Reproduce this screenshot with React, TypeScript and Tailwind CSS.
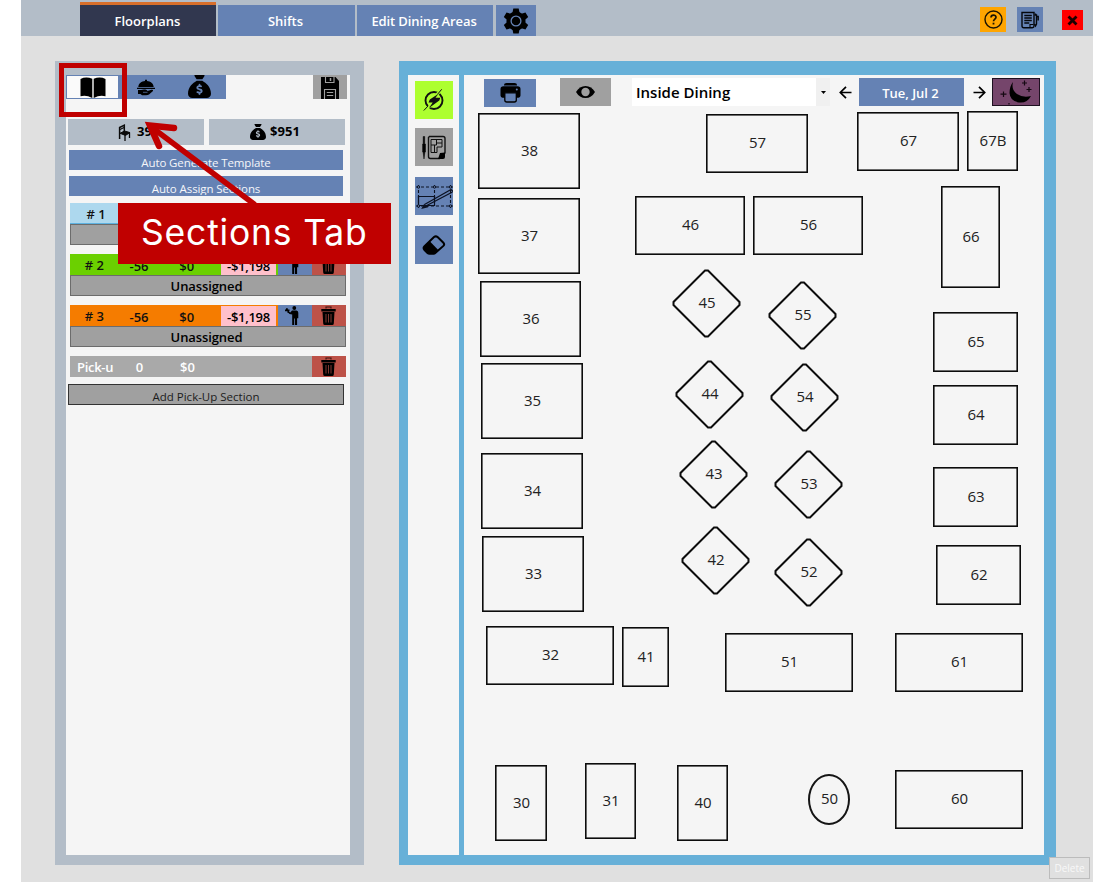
import React from "react";
import { FaSackDollar } from "react-icons/fa6";

type Shape = "rect" | "diamond" | "oval";
type Table = { id: string; x: number; y: number; w: number; h: number; shape?: Shape };

// Table positions are in canvas pixels, measured from the floor's top-left corner.
const tables: Table[] = [
  { id: "38", x: 14, y: 38, w: 102, h: 76 },
  { id: "37", x: 14, y: 123, w: 102, h: 76 },
  { id: "36", x: 16, y: 206, w: 101, h: 76 },
  { id: "35", x: 17, y: 288, w: 102, h: 76 },
  { id: "34", x: 17, y: 378, w: 102, h: 76 },
  { id: "33", x: 18, y: 461, w: 102, h: 76 },
  { id: "32", x: 22, y: 551, w: 128, h: 59 },
  { id: "41", x: 158, y: 552, w: 47, h: 60 },
  { id: "51", x: 261, y: 558, w: 128, h: 59 },
  { id: "61", x: 431, y: 558, w: 128, h: 59 },
  { id: "60", x: 431, y: 695, w: 128, h: 59 },
  { id: "30", x: 31, y: 690, w: 52, h: 76 },
  { id: "31", x: 121, y: 688, w: 51, h: 76 },
  { id: "40", x: 213, y: 690, w: 51, h: 76 },
  { id: "57", x: 242, y: 39, w: 102, h: 59 },
  { id: "67", x: 393, y: 37, w: 102, h: 59 },
  { id: "67B", x: 503, y: 36, w: 51, h: 60 },
  { id: "46", x: 171, y: 121, w: 110, h: 59 },
  { id: "56", x: 289, y: 121, w: 110, h: 59 },
  { id: "66", x: 477, y: 111, w: 59, h: 102 },
  { id: "65", x: 469, y: 237, w: 85, h: 60 },
  { id: "64", x: 469, y: 310, w: 85, h: 60 },
  { id: "63", x: 469, y: 392, w: 85, h: 60 },
  { id: "62", x: 472, y: 470, w: 85, h: 60 },
  { id: "45", x: 208, y: 194, w: 69, h: 69, shape: "diamond" },
  { id: "55", x: 304, y: 206, w: 69, h: 69, shape: "diamond" },
  { id: "44", x: 211, y: 285, w: 69, h: 69, shape: "diamond" },
  { id: "54", x: 306, y: 288, w: 69, h: 69, shape: "diamond" },
  { id: "43", x: 215, y: 365, w: 69, h: 69, shape: "diamond" },
  { id: "53", x: 310, y: 375, w: 69, h: 69, shape: "diamond" },
  { id: "42", x: 217, y: 451, w: 69, h: 69, shape: "diamond" },
  { id: "52", x: 310, y: 463, w: 69, h: 69, shape: "diamond" },
  { id: "50", x: 344, y: 699, w: 42, h: 51, shape: "oval" },
];

function TableShape({ t }: { t: Table }) {
  return (
    <div
      className="absolute flex items-center justify-center text-[15px] leading-none text-[#222]"
      style={{ left: t.x, top: t.y, width: t.w, height: t.h }}
    >
      {t.shape === "diamond" ? (
        <svg className="absolute inset-0 size-full" viewBox="0 0 69 69">
          <path d="M33 1.500h3L67.500 33v3L36 67.500h-3L1.500 36v-3z" fill="none" stroke="#0c0c0c" strokeWidth="2" />
        </svg>
      ) : t.shape === "oval" ? (
        <div className="absolute inset-0 rounded-[50%] border-2 border-[#151515]" />
      ) : (
        <svg className="absolute inset-0 size-full">
          <rect x="0.800" y="0.800" width={t.w - 1.6} height={t.h - 1.6} fill="none" stroke="#0c0c0c" strokeWidth="1.600" />
        </svg>
      )}
      <span className="relative -top-px left-[0.5px]">{t.id}</span>
    </div>
  );
}

function GearIcon() {
  return (
    <svg className="size-[26px]" viewBox="0 0 26 26">
      <g fill="#000">
        <circle cx="13" cy="13" r="9.600" />
        {[0, 60, 120].map((a) => (
          <path key={a} transform={`rotate(${a} 13 13)`} d="M10.300.5h5.400l1 5h-7.400zM10.300 25.500h5.400l1-5h-7.400z" />
        ))}
      </g>
      <circle cx="13" cy="13" r="4.900" fill="none" stroke="#6582b4" strokeWidth="1.300" />
    </svg>
  );
}

function HelpIcon() {
  return (
    <svg className="size-[19px]" viewBox="0 0 19 19" fill="none" stroke="#1c1400" strokeWidth="1.400">
      <circle cx="9.500" cy="9.500" r="8.500" />
      <path d="M7 7.500C7 4.300 12 4.300 12 7.200c0 1.700-2.500 2-2.500 4" strokeWidth="1.700" />
      <path d="M9.500 12.700v1.800" strokeWidth="1.800" />
    </svg>
  );
}

function NotesIcon() {
  return (
    <svg className="h-[18px] w-[18px]" viewBox="0 0 18 18" fill="none" stroke="#05070c" strokeWidth="1.400">
      <path d="M1 1.500h12V15q0 1.700-1.700 1.700H2.700Q1 16.700 1 15z" />
      <path d="M3.300 4.500h7.500M3.300 7h7.500M3.300 9.500h7.500M3.300 12h5" strokeWidth="1.300" />
      <path d="M13.500 4h2v9l-1 2-1-2M15.500 5.500h1.700v4M14.500 4V2.500" />
      <path d="M9 16.500v-3h3.500" strokeWidth="1.100" />
    </svg>
  );
}

function BookIcon() {
  return (
    <svg className="h-[21px] w-[26px]" viewBox="0 0 26 21">
      <path d="M.5 2Q6-.8 12.300 1.800V21Q6 17.500.5 19.300zM13.700 1.800Q20-.8 25.500 2v17.300Q20 17.500 13.700 21z" />
    </svg>
  );
}

function ServeIcon() {
  return (
    <svg className="h-[17px] w-[18px]" viewBox="0 0 18 17">
      <path d="M1.300 8C1.500 4.300 4.600 2.200 8 2V1q1-1 2 0v1c3.400.2 6.500 2.300 6.700 6zM0 8.700h18v1.400H0zM1 11h3l3-.4c1.500 0 3 .3 3.500 1.500l4-1.300q2-.2 1.500 1.200l-4 3.500q-1 .8-3 .8H5L3.500 15H1z" />
      <path d="M6 13.300h4.500" stroke="#6582b4" strokeWidth=".7" />
    </svg>
  );
}

function SaveIcon() {
  return (
    <svg className="h-[22px] w-[20px]" viewBox="0 0 20 22">
      <path d="M1 0h14.500L19 4v18H1z" />
      <path d="M5.500 0v5.500h8.500V0M4.500 22v-9.500h11V22M6.800 15.500h6.400M6.800 18.500h6.400" fill="none" stroke="#a0a0a0" strokeWidth="1.100" />
      <path d="M10.500 1v3" stroke="#a0a0a0" strokeWidth="1.500" />
    </svg>
  );
}

function ChairIcon() {
  return (
    <svg className="h-[17px] w-[13px]" viewBox="0 0 13 17" fill="none" stroke="#0a0a0a">
      <path d="M1.600 15V3.500L6.300 1.200V8" strokeWidth="1.500" />
      <path d="M2 9.300 6.500 7l5.500 1.600-4.500 2.800z" fill="#0a0a0a" />
      <path d="M7 10v7M11.500 8.500V14M2 5.500l4-2" strokeWidth="1.300" />
    </svg>
  );
}

function WaiterIcon() {
  return (
    <svg className="h-[19px] w-[14px]" viewBox="0 0 14 19">
      <circle cx="9.300" cy="2" r="1.900" />
      <path d="M7 4.500h4.500q1.800.3 1.800 2.300v5.400h-1.200V19H10v-6.500h-.8V19H7.200V8.500L4.500 8 2.300 5.800 3.300 5l2 1.600z" />
      <path d="M0 3.600h4.500v1.600H0zM1 2.200h1.800V4H1zM2.600 5h1.400v2H2.600z" />
    </svg>
  );
}

function TrashIcon() {
  return (
    <svg className="h-[19px] w-[15px]" viewBox="0 0 15 19">
      <path d="M.3 3h14.400v2.500H.3zM1.500 6h12l-.7 11.500q-.1 1.500-1.500 1.500H3.700q-1.400 0-1.500-1.500z" />
      <path d="M5 2.500V1h5v1.500" fill="none" stroke="#3c1410" strokeWidth="1.100" />
      <path d="M5 8v8.500M7.500 8v8.500M10 8v8.500" stroke="#8c4038" strokeWidth=".9" />
    </svg>
  );
}

function BoltIcon() {
  return (
    <svg className="size-[22px]" viewBox="0 0 22 22">
      <circle cx="11" cy="11.500" r="8.500" fill="none" stroke="#111" strokeWidth="1.900" />
      <path d="M18.500.5 13 6.500M3 17 .8 21.500l6-4" fill="none" stroke="#adff2f" strokeWidth="3" />
      <path d="M15.500 4.800 6.800 10.500 5.500 13.500h4.200L6 19l10.300-7.500 1-2.700h-4.800z" fill="#111" />
      <path d="M18.700.3 14.500 5.300M5 17 .8 21.500" fill="none" stroke="#111" strokeWidth="1" />
    </svg>
  );
}

function BlueprintIcon() {
  return (
    <svg className="h-[25px] w-[24px]" viewBox="0 0 24 25">
      <path d="M1.200 1.500h1.500V9h.8v8H2.900L2 24 1.100 17H.6V9h.6z" stroke="#000" strokeWidth=".5" />
      <path d="M7.500 1.500H21q2 0 2 2v14.500L17.500 23.500H8.500q-2 0-2-2v-19z" fill="none" stroke="#111" strokeWidth="1.400" />
      <path d="M23 17.500l-5 .5-2 6h5q2 0 2-2z" />
      <path d="M9 4.500h11v7.500h-5v5.500H9zM9 10h5.500V4.500M14.500 8H20M12.500 10v7.500" fill="none" stroke="#111" strokeWidth="1" />
    </svg>
  );
}

function GridLinesIcon() {
  return (
    <svg className="size-[38px]" viewBox="0 0 38 38" fill="none" stroke="#0c1222">
      <path d="M1 10h37M1 29h37M3.500 8v24M19.500 8v21M35.500 8v24" strokeWidth="1.100" strokeDasharray="3 2" />
      <path d="M3.500 19.500h16V28.500h-16z" strokeWidth="1.200" />
      <path d="M8 30.500 37.500 15M9.500 27.500 36 12.500l2 2M9.500 27.500l-2 3.500 5.500-1.500" strokeWidth="1.300" />
      <g fill="#6582b4" strokeWidth="1">
        <circle cx="3.500" cy="10" r="1.200" /><circle cx="19.500" cy="10" r="1.200" /><circle cx="35.500" cy="10" r="1.200" />
        <circle cx="3.500" cy="29" r="1.200" /><circle cx="35.500" cy="29" r="1.200" />
      </g>
    </svg>
  );
}

function EraserIcon() {
  return (
    <svg className="h-[20px] w-[24px]" viewBox="0 0 24 20">
      <path d="M8 6.500 2.500 11.500q-1.800 1.700 0 3.500l3 3q.8.800 2 .8H12l4-4z" />
      <path d="M2.500 11.200 12 2.100q1.800-1.500 3.600 0l5.800 5.600q1.500 1.600 0 3.200L13 18.300q-.5.500-1.200.5H7.500q-1.200 0-2-.8l-3-3q-1.800-2 0-3.800z" fill="none" stroke="#000" strokeWidth="2" />
    </svg>
  );
}

function PrintIcon() {
  return (
    <svg className="h-[20px] w-[21px]" viewBox="0 0 21 20">
      <path d="M4 2Q4 0 6.500 0h8Q17 0 17 2v.6H4zM3.500 3.200h14Q20.500 3.200 20.500 6v6.500q0 2-2 2.300H2.500q-2-.3-2-2.300V6q0-2.800 3-2.800z" />
      <path d="M4.800 9.800h11.500V17q0 2-2 2H6.800q-2 0-2-2z" fill="#6582b4" stroke="#000" strokeWidth="1.300" />
      <circle cx="16.800" cy="6.600" r="1" fill="#6582b4" />
    </svg>
  );
}

function EyeIcon() {
  return (
    <svg className="h-[12px] w-[19px]" viewBox="0 0 19 12">
      <path d="M0 6Q3.500 0 9.500 0T19 6Q15.500 12 9.500 12T0 6z" />
      <circle cx="9.500" cy="6" r="4.200" fill="#a0a0a0" />
    </svg>
  );
}

function ArrowIcon({ flip }: { flip?: boolean }) {
  return (
    <svg className={`h-[13px] w-[13px] ${flip ? "rotate-180" : ""}`} viewBox="0 0 13 13" fill="none" stroke="#000" strokeWidth="1.700">
      <path d="M12.500 6.500H1.500M7 .8 1.300 6.500 7 12.200" />
    </svg>
  );
}

function MoonIcon() {
  return (
    <svg className="h-[26px] w-[46px]" viewBox="0 0 46 26">
      <path d="M20 3q-2 8 4 12t14 2q-4 7.500-12 6.500Q17 22 16.500 14 16.700 7 20 3z" />
      <path d="M31.500 1.500v5M29 4h5M36 8v5M33.500 10.500h5M10.500 12.500v5.500M7.500 15.200h6M16 24v1.500" stroke="#140812" strokeWidth="1.200" />
    </svg>
  );
}

const tones = {
  blue: "bg-[#add8ee] border-[#5db1e0]",
  green: "bg-[#6bd000] border-[#6bd000]",
  orange: "bg-[#f57c00] border-[#f57c00]",
};

function Section({ name, tone }: { name: string; tone: keyof typeof tones }) {
  return (
    <div className="ml-1 w-[276px] text-[13px] font-semibold text-black">
      <div className={`flex h-[21px] border-b ${tones[tone]}`}>
        <div className="flex w-[144px] pt-[3px] leading-[19px] text-[#111]">
          <span className="-mt-px w-[49px] text-center whitespace-pre">{name}</span>
          <span className="w-[41px] text-center">-56</span>
          <span className="w-[55px] text-center">$0</span>
        </div>
        <div className="mt-px ml-[7px] h-5 w-[55px] bg-[#ffc0cb] text-center leading-[22px] tracking-[-0.3px]">-$1,198</div>
        <div className="ml-[2px] flex h-[21px] w-[34px] items-center justify-center bg-[#6582b4] pr-[6px]">
          <WaiterIcon />
        </div>
        <div className="flex h-[21px] w-[34px] items-center justify-center bg-[#bd5248] pr-[2px]">
          <TrashIcon />
        </div>
      </div>
      <div className="h-[21px] border border-[#6c6c6c] bg-[#a0a0a0] pr-[3px] text-center leading-[20px] tracking-[-0.1px]">Unassigned</div>
    </div>
  );
}

function TemplateButton({ children }: { children: React.ReactNode }) {
  return (
    <button className="ml-[3px] block h-[20px] w-[274px] overflow-hidden bg-[#6582b4] text-center text-[11.500px] text-[#f4f6fa]">
      <span className="block h-[17px] overflow-hidden pt-[3px] leading-[16px] tracking-[-0.1px]">{children}</span>
    </button>
  );
}

function SectionsPanel() {
  return (
    <aside className="flex h-[804px] w-[309px] flex-col border-t-[14px] border-r-[14px] border-b-[10px] border-l-[11px] border-[#b3bdc8] bg-[#f5f5f5]">
      <div className="flex h-6 shrink-0">
        <div className="flex w-[53px] justify-center border border-[#6582b4] bg-[#fafafa] pt-px"><BookIcon /></div>
        <div className="flex w-[107px] bg-[#6582b4]">
          <div className="flex w-[54px] items-center justify-center"><ServeIcon /></div>
          <div className="flex w-[54px] justify-center overflow-hidden"><FaSackDollar className="size-[23px]" /></div>
        </div>
        <div className="ml-[87px] flex w-[34px] items-end justify-center bg-[#a0a0a0]"><SaveIcon /></div>
      </div>

      <div className="mt-5 ml-[2px] flex h-[26px] shrink-0 gap-[5px] text-[13px] font-bold text-black">
        <div className="flex w-[136px] items-center bg-[#b3bdc8] pl-[50px]">
          <ChairIcon />
          <span className="ml-[6px]">39</span>
        </div>
        <div className="flex w-[136px] items-center bg-[#b3bdc8] pl-[41px]">
          <FaSackDollar className="size-[16px]" />
          <span className="ml-[4px] tracking-[0.1px]">$951</span>
        </div>
      </div>

      <div className="mt-[5px] flex flex-col gap-[6px]">
        <TemplateButton>Auto Generate Template</TemplateButton>
        <TemplateButton>Auto Assign Sections</TemplateButton>
      </div>

      <div className="mt-[7px] flex flex-col gap-[9px]">
        <Section name=" # 1" tone="blue" />
        <Section name="# 2" tone="green" />
        <Section name="# 3" tone="orange" />
        <div className="ml-1 flex h-[21px] w-[276px] bg-[#a9a9a9] text-[13px] leading-[23px] font-semibold text-white">
          <span className="w-[49px] pl-[7px] tracking-[-0.3px]">Pick-u</span>
          <span className="w-[41px] text-center">0</span>
          <span className="w-[55px] text-center">$0</span>
          <div className="ml-auto flex w-[34px] items-center justify-center bg-[#bd5248] pr-[2px]"><TrashIcon /></div>
        </div>
      </div>
      <button className="mt-[7px] ml-[2px] h-[21px] w-[276px] shrink-0 overflow-hidden border border-[#333] bg-[#a0a0a0] text-[11.500px] text-[#1c1c1c]">
        <span className="block h-[17px] overflow-hidden pt-[3px] leading-[16px]">Add Pick-Up Section</span>
      </button>
    </aside>
  );
}

function FloorPanel() {
  return (
    <main className="flex h-[804px] w-[657px] gap-[5px] border-t-[14px] border-r-[12px] border-b-[10px] border-l-[9px] border-[#67b0d8] bg-[#67b0d8]">
      <div className="flex w-[51px] flex-col items-center gap-[11px] bg-[#f5f5f5] pt-[6px]">
        <div className="-mb-[2px] flex size-[38px] items-center justify-center bg-[#adff2f]"><BoltIcon /></div>
        <div className="flex size-[38px] items-center justify-center bg-[#a0a0a0]"><BlueprintIcon /></div>
        <div className="flex size-[38px] items-center justify-center bg-[#6582b4]"><GridLinesIcon /></div>
        <div className="flex size-[38px] items-center justify-center bg-[#6582b4]"><EraserIcon /></div>
      </div>

      <div className="relative w-[580px] bg-[#f5f5f5]">
        <div className="flex h-[31px] items-stretch pt-[3px] pl-5">
          <div className="mt-px -mb-px flex w-[52px] items-center justify-center bg-[#6582b4]"><PrintIcon /></div>
          <div className="ml-[24px] flex w-[51px] items-center justify-center bg-[#a0a0a0]"><EyeIcon /></div>
          <div className="ml-[21px] flex w-[198px] bg-white">
            <span className="flex-1 pl-[4px] text-[15px] leading-[29px] font-semibold text-black">Inside Dining</span>
            <span className="flex w-[14px] items-center justify-center bg-[#f0f0f0]">
              <svg className="h-[3px] w-[5px]" viewBox="0 0 5 3"><path d="M0 0h5L2.500 3z" /></svg>
            </span>
          </div>
          <div className="flex w-[29px] items-center justify-center pl-px"><ArrowIcon /></div>
          <div className="w-[105px] bg-[#6582b4] pr-[2px] text-center text-[13px] leading-[30px] font-semibold text-white">Tue, Jul 2</div>
          <div className="flex w-[28px] items-center justify-center pl-[2px]"><ArrowIcon flip /></div>
          <div className="flex w-[48px] items-center justify-center border border-[#1d1020] bg-[#75456b]"><MoonIcon /></div>
        </div>
        {tables.map((t) => (
          <TableShape key={t.id} t={t} />
        ))}
      </div>
    </main>
  );
}

export default function App() {
  return (
    <div className="h-[883px] w-[1114px] overflow-hidden bg-white pl-[21px] font-['Open_Sans','Noto_Sans',sans-serif]">
      <div className="relative h-[882px] w-[1072px] bg-[#e0e0e0]">
        <header className="flex h-9 items-end bg-[#b3bdc8] pl-[59px] text-[13px] font-semibold text-white">
          <div className="h-[34px] w-[136px] border-t-[3px] border-[#d86f2c] bg-[#31374f] pr-px text-center leading-[33px]">Floorplans</div>
          <div className="ml-[2px] h-[31px] w-[137px] bg-[#6582b4] pr-[2px] text-center leading-[33px]">Shifts</div>
          <div className="ml-[2px] h-[31px] w-[136px] bg-[#6582b4] pr-[2px] text-center leading-[33px] tracking-[-0.1px]">Edit Dining Areas</div>
          <div className="ml-[3px] flex h-[31px] w-[40px] items-center justify-center bg-[#6582b4]"><GearIcon /></div>
          <div className="mr-[10px] ml-auto flex h-[29px] items-start">
            <div className="flex h-[25px] w-[26px] items-center justify-center bg-[#ffa500]"><HelpIcon /></div>
            <div className="ml-[11px] flex h-[25px] w-[26px] items-center justify-center bg-[#6582b4]"><NotesIcon /></div>
            <div className="mt-[3px] ml-[19px] flex h-[20px] w-[21px] items-center justify-center bg-[#ff0000]">
              <svg className="size-[11px]" viewBox="0 0 11 11"><path d="M1.500 1.500l8 8M9.500 1.500l-8 8" stroke="#1c0000" strokeWidth="2.800" /></svg>
            </div>
          </div>
        </header>

        <div className="flex gap-[35px] pt-[25px] pl-[34px]">
          <SectionsPanel />
          <FloorPanel />
        </div>

        <button className="absolute right-[3px] bottom-[3px] h-[22px] w-[41px] border border-[#bcbcbc] bg-[#e0e0e0] text-[10px] leading-[20px] text-[#f8f8f8]">
          Delete
        </button>

        <div className="absolute top-[63px] left-[38px] h-[54px] w-[68px] border-[5px] border-[#c00000]" />
        <svg className="absolute top-[110px] left-[119px] h-[100px] w-[120px]" viewBox="0 0 120 100" fill="none" stroke="#c00000" strokeLinecap="round">
          <path d="M10 16 114 94" strokeWidth="5.500" />
          <path d="M34 18 10 15.500 19 36" strokeWidth="6.500" strokeLinejoin="miter" />
        </svg>
        <div className="absolute top-[203px] left-[97px] h-[61px] w-[273px] bg-[#c00000] pl-[23px] font-['Inter',sans-serif] text-[35.500px] leading-[60px] tracking-[0.800px] whitespace-nowrap text-white">
          Sections Tab
        </div>
      </div>
    </div>
  );
}
